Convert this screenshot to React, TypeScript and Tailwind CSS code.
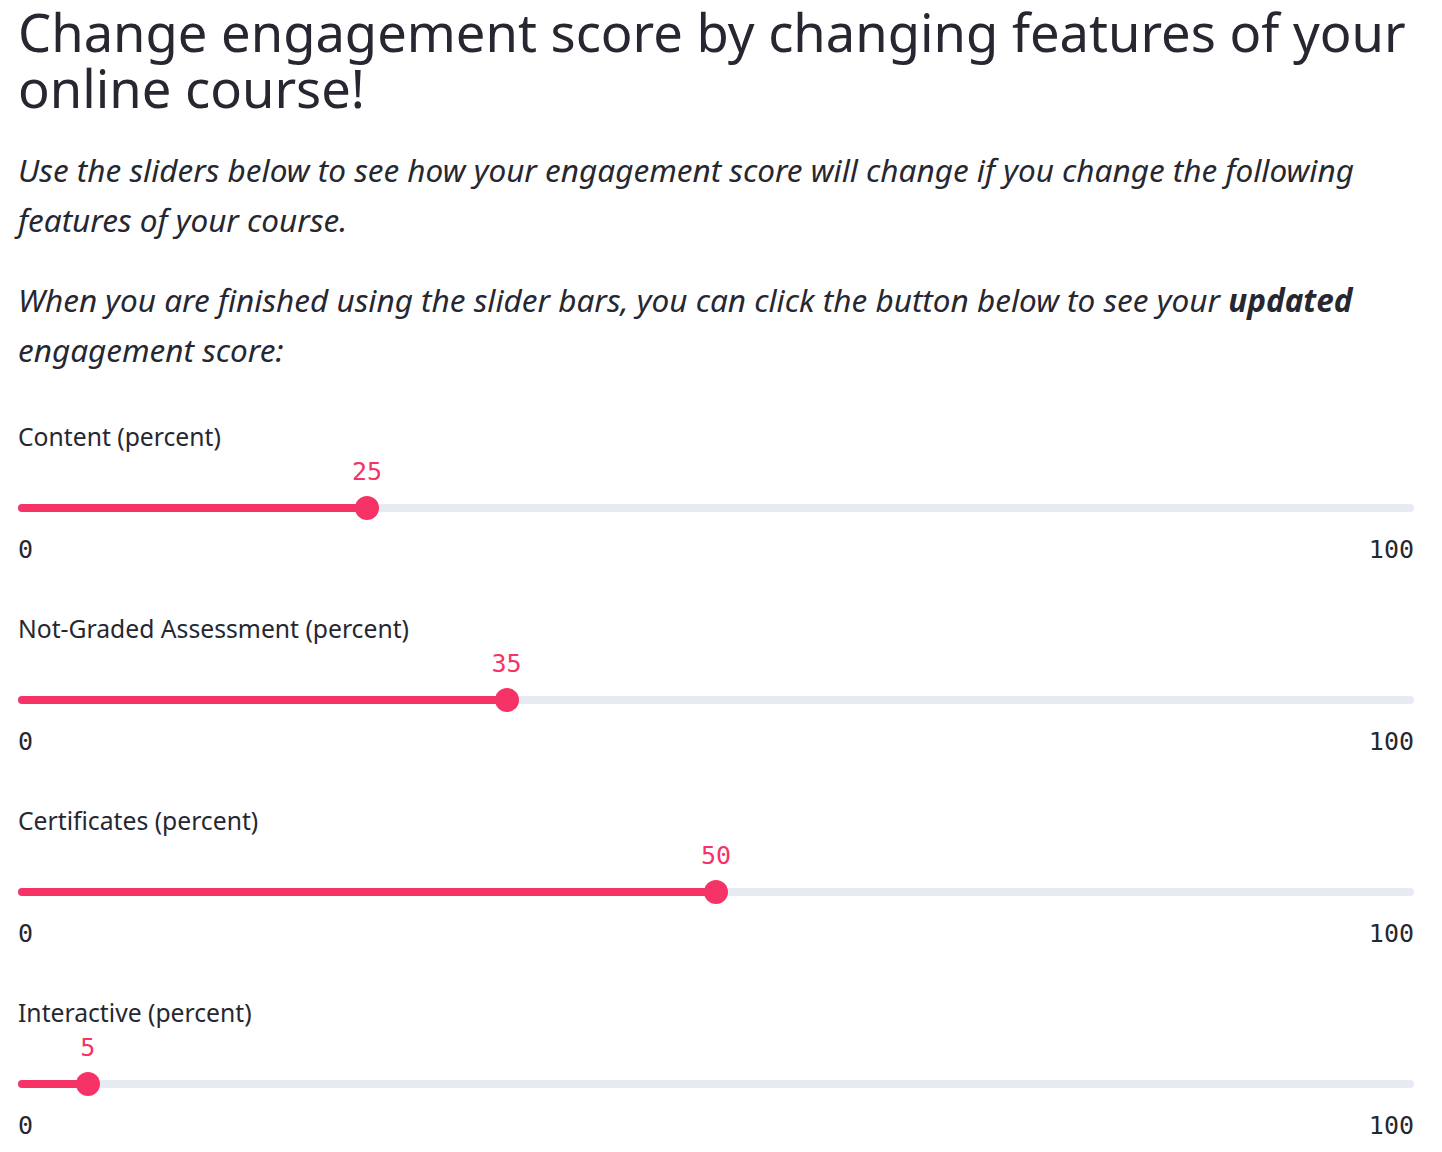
import React from "react";

const sliders = [
  { label: "Content (percent)", value: 25 },
  { label: "Not-Graded Assessment (percent)", value: 35 },
  { label: "Certificates (percent)", value: 50 },
  { label: "Interactive (percent)", value: 5 },
];

const sans = { fontFamily: '"Noto Sans", "Open Sans", sans-serif' };
const mono = { fontFamily: '"DejaVu Sans Mono", "Liberation Mono", monospace' };

function Slider({ label, value }: { label: string; value: number }) {
  return (
    <div className="mb-[49px]">
      <div className="text-[24.7px] leading-[30px] text-[#262730]">{label}</div>
      <div className="relative h-[41px]">
        <div
          className="absolute top-[5px] -translate-x-1/2 text-[25px] leading-[30px] text-[#f63366]"
          style={{ ...mono, left: `${value}%` }}
        >
          {value}
        </div>
      </div>
      <div className="relative flex h-[30px] items-center">
        <div className="relative h-[8px] w-full rounded-full bg-[#e6eaf1]">
          <div
            className="absolute left-0 top-0 h-[8px] rounded-full bg-[#f63366]"
            style={{ width: `${value}%` }}
          />
          <div
            className="absolute top-1/2 h-[24px] w-[24px] -translate-x-1/2 -translate-y-1/2 rounded-full bg-[#f63366]"
            style={{ left: `${value}%` }}
          />
        </div>
      </div>
      <div
        className="mt-[12px] flex justify-between text-[25px] leading-[30px] text-[#262730]"
        style={mono}
      >
        <span>0</span>
        <span>100</span>
      </div>
    </div>
  );
}

export default function App() {
  return (
    <div className="min-h-[1152px] w-[1442px] bg-white" style={sans}>
      <div className="w-[1414px] pl-[18px]">
        <h1 className="pt-[4px] text-[52.5px] font-normal leading-[56px] text-[#262730]">
          Change engagement score by changing features of your online course!
        </h1>
        <p className="mt-[29px] text-[31.5px] italic leading-[50px] text-[#262730]">
          Use the sliders below to see how your engagement score will change if you change the following
          features of your course.
        </p>
        <p className="mt-[30px] text-[31.5px] italic leading-[50px] text-[#262730]">
          When you are finished using the slider bars, you can click the button below to see your{" "}
          <b className="font-bold">updated</b> engagement score:
        </p>
        <div className="mt-[47px]">
          {sliders.map((s) => (
            <Slider key={s.label} {...s} />
          ))}
        </div>
      </div>
    </div>
  );
}
